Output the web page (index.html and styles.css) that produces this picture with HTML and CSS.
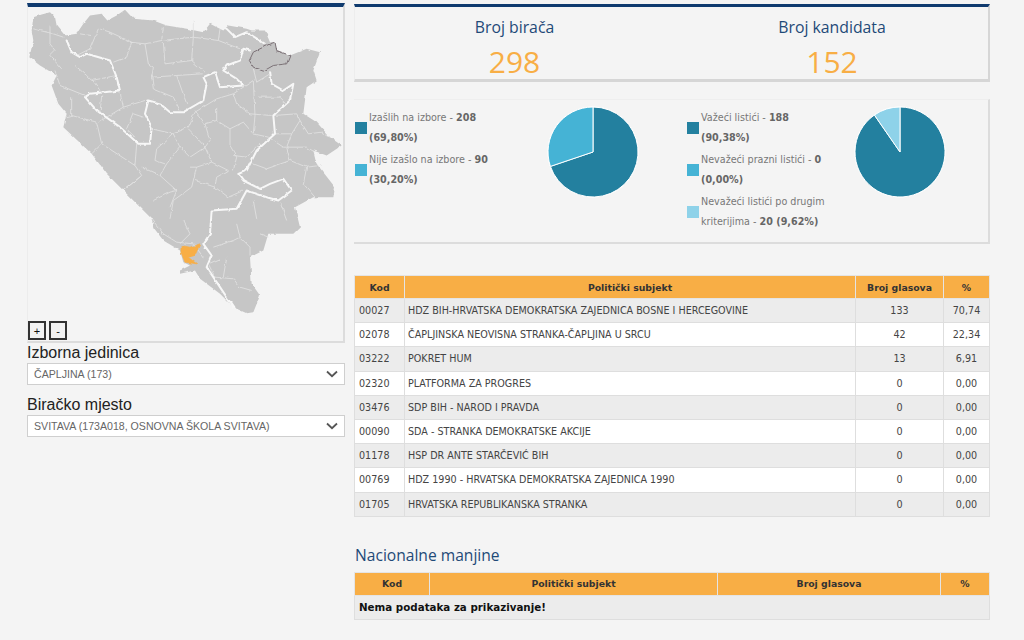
FILE: index.html
```html
<!DOCTYPE html>
<html lang="bs">
<head>
<meta charset="utf-8">
<title>Izbori</title>
<link rel="stylesheet" href="styles.css">
</head>
<body>
<div class="page">
  <aside class="left">
    <div class="map-box">
      <svg class="map" viewBox="28 7 315 333" aria-hidden="true">
        <defs>
          <filter id="rough" filterUnits="userSpaceOnUse" x="20" y="0" width="330" height="345" color-interpolation-filters="sRGB">
            <feTurbulence type="fractalNoise" baseFrequency="0.16" numOctaves="2" seed="4"/>
            <feDisplacementMap in="SourceGraphic" scale="3" xChannelSelector="R" yChannelSelector="G"/>
          </filter>
        </defs>
        <g filter="url(#rough)">
          <g transform="translate(20,0) scale(.33333)">
            <path class="land" d="M40 50L65 42 90 35 105 50 110 75 135 105 170 100 190 70 210 45 245 40 262 60 290 45 315 28 340 55 400 60 440 75 500 85 550 95 570 70 610 90 625 75 680 85 695 90 735 90 750 125 765 125 770 150 810 165 860 145 900 155 880 210 890 240 860 260 850 340 890 365 930 410 965 435 920 465 880 450 890 490 945 560 940 590 880 590 825 620 835 660 840 680 820 700 745 700 730 750 690 770 695 850 720 885 700 935 680 938 640 920 600 880 540 835 525 810 480 820 480 810 510 795 490 785 480 750 430 720 400 680 395 655 310 570 260 520 215 460 130 380 140 340 115 310 95 255 110 225 60 195 28 170 40 120 35 90Z"/>
            <path class="thin" d="M40 85L100 100 130 110M90 75L90 130 105 150 90 165 125 205M235 85L210 145 170 165M210 105L180 100M240 85L270 95 335 125 320 170 280 185M330 125L375 130 385 190 400 200 395 235M375 130L425 120 430 80M425 120L520 110 520 60M520 110L515 180 555 215M430 125L435 190 515 180M395 230L470 225 500 310M470 225L545 220M395 225L400 265 460 290 480 330M600 85L595 120 520 110M595 120L660 145M165 195L200 225 215 240 290 225M215 235L240 270M105 210L120 255 195 285M245 285L240 340M155 290L155 345 230 365 245 430 215 460M135 350L155 345M300 275L310 320 375 300M340 335L320 385 345 410M340 340L370 350M235 365L310 320M245 430L345 495 365 525 310 570M350 430L345 495M395 385L460 400 410 445 405 480 435 490M365 500L420 525 470 570M460 400L505 380 525 335M460 400L480 440 440 490 420 525M480 440L510 470 555 440 520 400 505 385M525 335L590 295 640 280 700 240M525 330L555 370 590 360 590 320M590 360L630 385 630 435 650 470 640 510M555 370L570 420 555 440 575 485 625 510M640 280L650 310 690 340 755 345M700 240L705 345 700 400 745 410M630 385L670 365 700 400M760 345L830 340M800 310L780 290 715 290M700 205L710 245 750 220M640 465L680 470 720 430M575 485L530 500 515 560 460 600 450 655M510 500L530 500M525 540L585 560 625 590 670 570M625 510L590 530 585 560M745 410L790 440 860 440 885 455M800 440L810 480 860 500 850 550 885 590M860 500L905 495M810 480L740 505 700 490M840 360L865 400 905 395 930 410M830 340L840 360 815 400 760 400M815 400L800 440M700 600L710 655M780 605L800 660M400 600L450 575 470 570M310 570L360 530M395 655L430 700 470 725 520 730 550 770M490 660L510 700 480 730M650 670L660 710 690 740 690 765M580 740L640 720 660 710M720 700L745 710M600 775L565 790 585 830 640 835 660 860 695 870M620 770L610 830M470 570L450 620"/>
            <path class="thick" d="M140 120L155 155 180 170 200 160 270 180 290 230 300 270 210 280 195 290 230 330 300 380 355 430 390 430 395 380 375 340 385 300 420 310 450 335 490 335 550 300 560 250 550 230 585 215 600 260 670 255 650 235 610 210 620 195 660 180 670 145 690 150M620 85L645 110 680 95 735 130M750 215L755 250 790 270 820 250 810 300 760 345 765 400 710 450 680 510 655 520 670 540 720 565 750 550 790 535 815 570 775 600 740 590 680 570 650 625 575 630 570 700 550 730 575 765 560 800 600 860 640 920"/>
            <path class="muni" d="M688 180L700 155 750 130 765 125 770 150 810 165 800 190 760 195 730 212 700 200Z"/>
            <path class="orange" d="M483 735L510 740 540 730 525 765 505 770 530 790 495 785 483 755Z"/>
          </g>
        </g>
      </svg>
      <div class="zoom-btns"><button class="zb" type="button">+</button><button class="zb" type="button">-</button></div>
    </div>
    <label class="sel-label sel-first">Izborna jedinica</label>
    <div class="select"><span>ČAPLJINA (173)</span><svg class="chev" viewBox="0 0 12 8"><path d="M1 1.5L6 6.2 11 1.5"/></svg></div>
    <label class="sel-label sel-second">Biračko mjesto</label>
    <div class="select"><span>SVITAVA (173A018, OSNOVNA ŠKOLA SVITAVA)</span><svg class="chev" viewBox="0 0 12 8"><path d="M1 1.5L6 6.2 11 1.5"/></svg></div>
  </aside>

  <main class="right">
    <section class="stats">
      <div class="stat"><h2>Broj birača</h2><div class="num">298</div></div>
      <div class="stat"><h2>Broj kandidata</h2><div class="num">152</div></div>
    </section>

    <section class="charts">
      <div class="chart">
        <ul class="legend">
          <li><i class="sw c1"></i><div><div>Izašlih na izbore - <b>208</b></div><div><b>(69,80%)</b></div></div></li>
          <li><i class="sw c2"></i><div><div>Nije izašlo na izbore - <b>90</b></div><div><b>(30,20%)</b></div></div></li>
        </ul>
        <svg class="pie" viewBox="0 0 92 92">
          <circle cx="46" cy="46" r="45.5" fill="#fff"/>
          <path fill="#23809f" d="M46 46L46 1A45 45 0 1 1 3.4 60.4Z" stroke="#fff" stroke-width="1"/>
          <path fill="#45b3d5" d="M46 46L3.4 60.4A45 45 0 0 1 46 1Z" stroke="#fff" stroke-width="1"/>
        </svg>
      </div>
      <div class="chart chart-b">
        <ul class="legend">
          <li><i class="sw c1"></i><div><div>Važeći listići - <b>188</b></div><div><b>(90,38%)</b></div></div></li>
          <li><i class="sw c2"></i><div><div>Nevažeći prazni listići - <b>0</b></div><div><b>(0,00%)</b></div></div></li>
          <li><i class="sw c3"></i><div><div>Nevažeći listići po drugim</div><div>kriterijima - <b>20 (9,62%)</b></div></div></li>
        </ul>
        <svg class="pie" viewBox="0 0 92 92">
          <circle cx="46" cy="46" r="45.5" fill="#fff"/>
          <path fill="#23809f" d="M46 46L46 1A45 45 0 1 1 20.4 9Z" stroke="#fff" stroke-width="1"/>
          <path fill="#8ed2e9" d="M46 46L20.4 9A45 45 0 0 1 46 1Z" stroke="#fff" stroke-width="1"/>
        </svg>
      </div>
    </section>

    <table class="grid results">
      <colgroup><col class="r1"><col class="r2"><col class="r3"><col class="r4"></colgroup>
      <thead><tr><th>Kod</th><th>Politički subjekt</th><th>Broj glasova</th><th>%</th></tr></thead>
      <tbody>
        <tr><td>00027</td><td>HDZ BIH-HRVATSKA DEMOKRATSKA ZAJEDNICA BOSNE I HERCEGOVINE</td><td class="ctr">133</td><td class="ctr">70,74</td></tr>
        <tr><td>02078</td><td>ČAPLJINSKA NEOVISNA STRANKA-ČAPLJINA U SRCU</td><td class="ctr">42</td><td class="ctr">22,34</td></tr>
        <tr><td>03222</td><td>POKRET HUM</td><td class="ctr">13</td><td class="ctr">6,91</td></tr>
        <tr><td>02320</td><td>PLATFORMA ZA PROGRES</td><td class="ctr">0</td><td class="ctr">0,00</td></tr>
        <tr><td>03476</td><td>SDP BIH - NAROD I PRAVDA</td><td class="ctr">0</td><td class="ctr">0,00</td></tr>
        <tr><td>00090</td><td>SDA - STRANKA DEMOKRATSKE AKCIJE</td><td class="ctr">0</td><td class="ctr">0,00</td></tr>
        <tr><td>01178</td><td>HSP DR ANTE STARČEVIĆ BIH</td><td class="ctr">0</td><td class="ctr">0,00</td></tr>
        <tr><td>00769</td><td>HDZ 1990 - HRVATSKA DEMOKRATSKA ZAJEDNICA 1990</td><td class="ctr">0</td><td class="ctr">0,00</td></tr>
        <tr><td>01705</td><td>HRVATSKA REPUBLIKANSKA STRANKA</td><td class="ctr">0</td><td class="ctr">0,00</td></tr>
      </tbody>
    </table>

    <h3 class="sub">Nacionalne manjine</h3>
    <table class="grid minor">
      <colgroup><col class="m1"><col class="m2"><col class="m3"><col class="m4"></colgroup>
      <thead><tr><th>Kod</th><th>Politički subjekt</th><th>Broj glasova</th><th>%</th></tr></thead>
      <tbody><tr><td colspan="4" class="empty">Nema podataka za prikazivanje!</td></tr></tbody>
    </table>
  </main>
</div>
</body>
</html>
```
FILE: styles.css
```css
* { box-sizing: border-box; }
html, body { margin: 0; padding: 0; height: 640px; overflow: hidden; }
body { background: #f4f4f4; font-family: "DejaVu Sans", sans-serif; color: #333; }
.page { display: grid; grid-template-columns: 318px 636px; column-gap: 9px; padding: 3px 0 0 27px; }

.left { display: flex; flex-direction: column; }
.map-box { position: relative; height: 340px; border-top: 4px solid #0f3a6e; border-right: 2px solid #dcdcdc; border-bottom: 2px solid #dcdcdc; border-left: 1px solid #ececec; }
.map { display: block; width: 100%; height: 334px; filter: blur(.35px); }
.land { fill: #c6c6c6; }
.thin { fill: none; stroke: #e2e2e2; stroke-width: 2.5; stroke-linejoin: round; }
.thick { fill: none; stroke: #f7f7f7; stroke-width: 6; stroke-linejoin: round; stroke-linecap: round; }
.muni { fill: #c2c2c2; stroke: #7a7075; stroke-width: 3; }
.orange { fill: #f8ae45; stroke: #f8ae45; stroke-width: 2; }
.zoom-btns { position: absolute; left: 0; bottom: 1px; display: flex; gap: 3px; }
.zb { width: 18px; height: 19px; padding: 0; margin: 0; border: 2px solid #333; background: #f2f2f2; font: 11px "Liberation Sans", sans-serif; color: #111; }

.sel-label { display: block; font: 16px/18px "Liberation Sans", sans-serif; color: #222; }
.sel-first { margin-top: 1px; margin-bottom: 1px; }
.sel-second { margin-top: 11px; margin-bottom: 1px; }
.select { display: flex; align-items: center; justify-content: space-between; height: 22px; padding: 0 6px; background: #fff; border: 1px solid #cfcfcf; font: 10.6px "Liberation Sans", sans-serif; color: #666; }
.chev { width: 12px; height: 8px; }
.chev path { fill: none; stroke: #555; stroke-width: 1.8; }

.right { display: flex; flex-direction: column; padding-top: 1px; }
.stats { display: grid; grid-template-columns: 319px 316px; height: 78px; border-top: 3px solid #0f3a6e; border-right: 2px solid #d6d6d6; border-bottom: 3px solid #d6d6d6; border-left: 1px solid #ededed; }
.stat { text-align: center; font-family: "Open Sans", sans-serif; }
.stat h2 { margin: 8px 0 0; font-weight: 400; font-size: 15.8px; line-height: 24px; color: #1f4a78; }
.num { margin-top: 5px; font-size: 30px; line-height: 36px; color: #f8ae45; }

.charts { display: grid; grid-template-columns: 332px 304px; height: 145px; margin-top: 17px; padding-top: 6px; border-top: 1px solid #eeeeee; border-right: 2px solid #dcdcdc; border-bottom: 2px solid #dcdcdc; }
.chart { display: flex; }
.legend { list-style: none; margin: 2px 0 0; padding: 0; width: 193px; }
.chart-b .legend { width: 168px; }
.legend li { display: flex; align-items: center; font-size: 9.6px; line-height: 20px; color: #777; margin-bottom: 2px; }
.legend b { color: #666; }
.sw { flex: none; width: 12px; height: 12px; margin: 0 2px 0 1px; }
.c1 { background: #23809f; }
.c2 { background: #45b3d5; }
.c3 { background: #8ed2e9; }
.pie { width: 92px; height: 92px; flex: none; }

.grid { width: 635px; border-collapse: collapse; table-layout: fixed; font-size: 9.6px; color: #444; }
.grid th { height: 23px; padding: 0; background: #f8ae45; border: 1px solid #e4e4e4; font-weight: 700; color: #333; font-size: 9.3px; }
.grid td { height: 24.2px; padding: 0 4px; border: 1px solid #dedede; background: #fff; }
.grid td:nth-child(2) { padding-left: 3px; }
.grid tbody tr:nth-child(odd) td { background: #ececec; }
.ctr { text-align: center; }
.results { margin-top: 31px; }
.r1 { width: 50px; } .r2 { width: 451px; } .r3 { width: 88px; } .r4 { width: 46px; }
.m1 { width: 75px; } .m2 { width: 288px; } .m3 { width: 223px; } .m4 { width: 49px; }
.sub { margin: 27px 0 6px 1px; font: 400 15.6px/22px "Open Sans", sans-serif; color: #1f4a78; }
.grid .empty { font-weight: 700; color: #111; font-size: 10.3px; }
```
